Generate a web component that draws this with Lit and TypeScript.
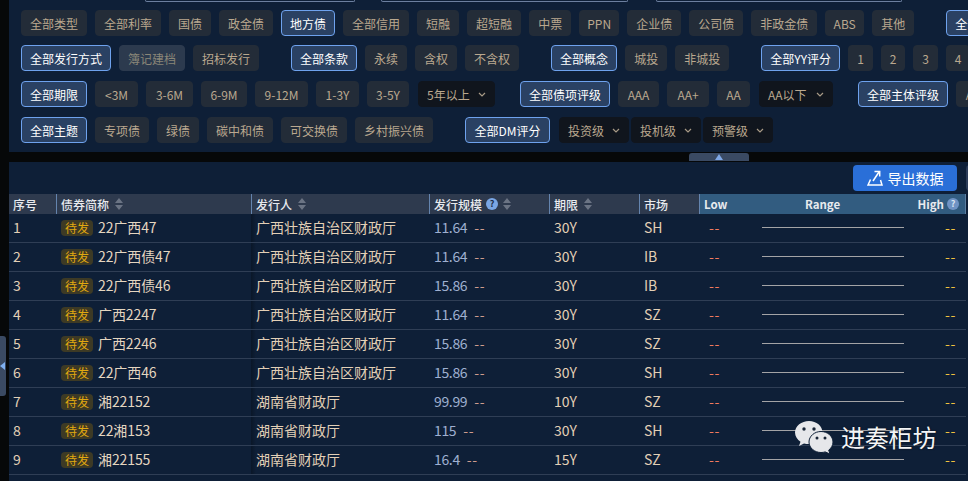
import { LitElement, html, css, svg } from "lit";
import { customElement } from "lit/decorators.js";

type Chip = { t: string; k?: "on" | "off" | "dd" | ""; gap?: "g" | "t" | ""; w?: number };

const c = (t: string, k?: Chip["k"], gap?: Chip["gap"], w?: number): Chip => ({ t, k, gap, w });
const n = (t: string, w: number): Chip => ({ t, w });

const filterRows: Chip[][] = [
  [c("全部类型"), c("全部利率"), c("国债"), c("政金债"), c("地方债", "on"), c("全部信用"), c("短融"), c("超短融"), c("中票"), n("PPN", 40), c("企业债"), c("公司债"), c("非政金债"), n("ABS", 39), c("其他"), c("全部发行", "on", "g")],
  [c("全部发行方式", "on"), c("簿记建档", "off"), c("招标发行"), c("全部条款", "on", "g"), c("永续"), c("含权"), c("不含权"), c("全部概念", "on", "g"), c("城投"), c("非城投"), c("全部YY评分", "on", "g", 79), n("1", 25), n("2", 24), n("3", 25), n("4", 24)],
  [c("全部期限", "on"), n("<3M", 43), n("3-6M", 47), n("6-9M", 46), n("9-12M", 53), n("1-3Y", 43), n("3-5Y", 42), c("5年以上", "dd", "", 77), c("全部债项评级", "on", "t"), n("AAA", 41), n("AA+", 42), n("AA", 33), c("AA以下", "dd", "", 74), c("全部主体评级", "on", "t"), n("AAA", 41)],
  [c("全部主题", "on"), c("专项债"), c("绿债"), c("碳中和债"), c("可交换债"), c("乡村振兴债"), c("全部DM评分", "on", "g", 85), c("投资级", "dd", "", 70), c("投机级", "dd", "", 70), c("预警级", "dd", "", 70)],
];

const gx = "广西壮族自治区财政厅";
const hn = "湖南省财政厅";
const bonds = [
  ["22广西47", gx, "11.64", "30Y", "SH"],
  ["22广西债47", gx, "11.64", "30Y", "IB"],
  ["22广西债46", gx, "15.86", "30Y", "IB"],
  ["广西2247", gx, "11.64", "30Y", "SZ"],
  ["广西2246", gx, "15.86", "30Y", "SZ"],
  ["22广西46", gx, "15.86", "30Y", "SH"],
  ["湘22152", hn, "99.99", "10Y", "SZ"],
  ["22湘153", hn, "115", "30Y", "SH"],
  ["湘22155", hn, "16.4", "15Y", "SZ"],
];

const chevron = svg`<svg class="chev" width="8" height="5" viewBox="0 0 8 5"><path d="M1 1l3 3 3-3" fill="none" stroke="currentColor" stroke-width="1.2"/></svg>`;
const sort = svg`<svg class="sort" width="8" height="12" viewBox="0 0 8 12"><path d="M4 0L8 5H0z M0 7h8L4 12z" fill="#6b7484"/></svg>`;

@customElement("app-root")
export class AppRoot extends LitElement {
  static styles = css`
    :host {
      display: block;
      position: relative;
      width: 968px;
      height: 481px;
      overflow: hidden;
      background: #060809;
      font-family: "Noto Sans CJK SC", "Noto Sans", sans-serif;
      box-sizing: border-box;
      padding-left: 9px;
    }
    .filters {
      height: 152px;
      background: #0e1f37;
      overflow: hidden;
      box-sizing: border-box;
    }
    .clipped {
      display: flex;
      height: 2px;
      margin-bottom: 8px;
    }
    .clipped i {
      display: block;
      height: 2px;
      box-sizing: border-box;
      border: 1px solid #6c7f9f;
      border-top: 0;
      border-radius: 0 0 3px 3px;
    }
    .clipped .a { margin-left: 136px; width: 210px; }
    .clipped .b { margin-left: 26px; width: 247px; }
    .clipped .c { margin-left: 28px; width: 246px; }
    .row {
      display: flex;
      flex-wrap: nowrap;
      gap: 8px;
      height: 26px;
      padding-left: 12px;
      margin-bottom: 10px;
      white-space: nowrap;
    }
    .row.first { margin-bottom: 9px; }
    .chip {
      flex: none;
      display: flex;
      align-items: center;
      justify-content: center;
      height: 26px;
      box-sizing: border-box;
      padding: 0 8px;
      border: 1px solid #232c38;
      border-radius: 4px;
      background: #232c38;
      color: #baa88f;
      font-size: 12px;
    }
    .chip.fixed { padding: 0; }
    .chip.on {
      background: #2a4163;
      border-color: #6ea2ee;
      color: #fff;
    }
    .chip.off {
      background: #2c3a4e;
      border-color: #2c3a4e;
      color: #8a8678;
    }
    .chip.dd {
      background: #10151d;
      border-color: #10151d;
      margin: 0 -7px 0 1px;
      padding: 0 8px;
      justify-content: space-between;
    }
    .chip.g { margin-left: 24px; }
    .chip.t { margin-left: 24px; }
    .chev { color: #a89a86; }

    .main {
      position: relative;
      height: 319px;
      margin-top: 10px;
      background: #0e1f37;
      overflow: hidden;
    }
    .toolbar {
      display: flex;
      gap: 9px;
      height: 32px;
      padding: 3px 0 0 844px;
      box-sizing: border-box;
    }
    .export {
      flex: none;
      display: flex;
      align-items: center;
      justify-content: center;
      gap: 5px;
      width: 104px;
      height: 26px;
      border-radius: 4px;
      background: #2a6fd8;
      color: #fff;
      font-size: 14px;
    }
    .more {
      flex: none;
      width: 40px;
      height: 26px;
      border-radius: 4px;
      background: #2c3c58;
    }
    .grid {
      display: grid;
      grid-template-columns: 47px 195px 178px 120px 90px 60px 267px;
      width: 959px;
    }
    .h {
      display: flex;
      align-items: center;
      gap: 6px;
      height: 20px;
      box-sizing: border-box;
      padding-left: 4px;
      background: #2e3a4e;
      color: #e8eaee;
      font-size: 12px;
      font-weight: 500;
      border-left: 1px solid #6484ae;
    }
    .h.plain { border-left: 0; padding-left: 4px; }
    .h.rng {
      background: #325c80;
      justify-content: space-between;
      padding: 0 6px 0 4px;
      border-right: 1px solid #5b7da0;
      font-weight: 700;
      font-size: 11.5px;
    }
    .hi { display: flex; align-items: center; gap: 3px; }
    .help {
      flex: none;
      display: flex;
      align-items: center;
      justify-content: center;
      width: 12px;
      height: 12px;
      margin: 0 -1px 0 -2px;
      border-radius: 50%;
      background: #7aa6e4;
      color: #1b2c46;
      font-size: 9px;
      font-weight: 700;
      line-height: 12px;
    }
    .rng .help { margin: 0; background: #6f93c4; color: #d9e4f2; }
    .d {
      display: flex;
      align-items: center;
      height: 29px;
      box-sizing: border-box;
      padding: 0 0 2px 4px;
      border-bottom: 1px solid #2f3e55;
      color: #e3d0b6;
      font-size: 14px;
      white-space: nowrap;
    }
    .d.name { gap: 5px; padding-left: 5px; color: #e5d6c0; }
    .name .txt { letter-spacing: -0.1px; }
    .d.issuer {
      background: linear-gradient(90deg, rgba(0, 0, 0, 0.28), transparent 5px);
      padding-left: 5px;
    }
    .d.size { gap: 7px; padding-left: 5px; color: #9fb0d0; }
    .size .num { letter-spacing: -0.35px; }
    .d.term, .d.mkt { padding-left: 5px; }
    .tag {
      display: block;
      width: 32px;
      height: 16px;
      margin-top: 2px;
      line-height: 16px;
      text-align: center;
      border-radius: 4px;
      background: #3d3a25;
      color: #e2a90f;
      font-size: 12px;
    }
    .dash-n { color: #cf9c8e; letter-spacing: 0.7px; }
    .d.range { padding: 0 10px 2px 10px; justify-content: space-between; }
    .line {
      flex: none;
      width: 142px;
      height: 1px;
      background: #a4a4a6;
    }
    .lo { color: #f27a5e; letter-spacing: 0.7px; width: 53px; }
    .hiv { color: #efc23f; letter-spacing: 0.7px; width: 52px; text-align: right; }

    .collapse-top {
      position: absolute;
      left: 689px;
      top: 153px;
      width: 60px;
      height: 8px;
      border-radius: 3px 3px 0 0;
      background: #3a4a63;
      display: flex;
      justify-content: center;
      align-items: flex-end;
    }
    .tri-up {
      width: 0;
      height: 0;
      border-left: 4px solid transparent;
      border-right: 4px solid transparent;
      border-bottom: 6px solid #7fa8e6;
      margin-bottom: 1px;
    }
    .collapse-left {
      position: absolute;
      left: 0;
      top: 336px;
      width: 6px;
      height: 60px;
      border-radius: 0 3px 3px 0;
      background: #3a4a63;
      display: flex;
      align-items: center;
    }
    .tri-left {
      width: 0;
      height: 0;
      border-top: 4px solid transparent;
      border-bottom: 4px solid transparent;
      border-right: 5px solid #7fb0f0;
    }
    .mark {
      position: absolute;
      left: 795px;
      top: 419px;
      display: flex;
      align-items: center;
      gap: 8px;
      color: #f4f5f6;
      font-size: 24px;
      line-height: 34px;
      letter-spacing: -0.2px;
      text-shadow: 0 0 2px rgba(0, 0, 0, 0.6);
    }
    .mark svg { margin-top: 2px; }
  `;

  private chip(x: Chip) {
    const cls = ["chip", x.k ?? "", x.gap ?? "", x.w && x.k !== "dd" ? "fixed" : ""].join(" ");
    const st = x.w ? `width:${x.w}px` : "";
    return html`<div class=${cls} style=${st}>${x.t}${x.k === "dd" ? chevron : ""}</div>`;
  }

  render() {
    return html`
      <div class="filters">
        <div class="clipped"><i class="a"></i><i class="b"></i><i class="c"></i></div>
        ${filterRows.map(
          (r, i) => html`<div class="row ${i === 0 ? "first" : ""}">${r.map((x) => this.chip(x))}</div>`
        )}
      </div>
      <div class="main">
        <div class="toolbar">
          <div class="export">
            <svg width="16" height="16" viewBox="0 0 16 16" fill="none" stroke="#fff" stroke-width="1.5">
              <path d="M3.5 9.5L1 15h14l-1.5-5" />
              <path d="M6 11L12 2" />
              <path d="M7.5 1.500h5.200v5" />
            </svg>
            <span>导出数据</span>
          </div>
          <div class="more"></div>
        </div>
        <div class="grid">
          <div class="h plain">序号</div>
          <div class="h">债券简称 ${sort}</div>
          <div class="h">发行人 ${sort}</div>
          <div class="h">发行规模 <span class="help">?</span>${sort}</div>
          <div class="h">期限 ${sort}</div>
          <div class="h">市场</div>
          <div class="h rng">
            <span>Low</span><span>Range</span>
            <span class="hi">High <span class="help">?</span></span>
          </div>
          ${bonds.map(
            (b, i) => html`
              <div class="d no">${i + 1}</div>
              <div class="d name"><span class="tag">待发</span><span class="txt">${b[0]}</span></div>
              <div class="d issuer">${b[1]}</div>
              <div class="d size"><span class="num">${b[2]}</span><span class="dash-n">--</span></div>
              <div class="d term">${b[3]}</div>
              <div class="d mkt">${b[4]}</div>
              <div class="d range">
                <span class="lo">--</span><span class="line"></span><span class="hiv">--</span>
              </div>
            `
          )}
        </div>
      </div>
      <div class="collapse-top"><div class="tri-up"></div></div>
      <div class="collapse-left"><div class="tri-left"></div></div>
      <div class="mark">
        <svg width="38" height="33" viewBox="0 0 38 33">
          <path d="M14 0C6.500 0 0 5 0 11.500c0 4 2.400 7 5.500 9.200L4 25l5-2.600c1.500.4 3 .6 5 .6 7.500 0 13.500-5 13.500-11.500S21.500 0 14 0z" fill="#e6e7ea" />
          <circle cx="9" cy="8" r="1.700" fill="#1a2638" />
          <circle cx="19" cy="8" r="1.700" fill="#1a2638" />
          <path d="M26 10.500c-6.500 0-12 4.700-12 10.500s5.500 10.500 12 10.500c1.500 0 2.900-.2 4.200-.6l4.800 2.100-1.300-3.900c2.600-1.900 4.300-4.800 4.300-8.100 0-5.800-5.500-10.500-12-10.500z" fill="#e6e7ea" stroke="#0e1f37" stroke-width="1" />
          <circle cx="22" cy="17" r="1.500" fill="#1a2638" />
          <circle cx="30" cy="17" r="1.500" fill="#1a2638" />
        </svg>
        <span>进奏柜坊</span>
      </div>
    `;
  }
}
